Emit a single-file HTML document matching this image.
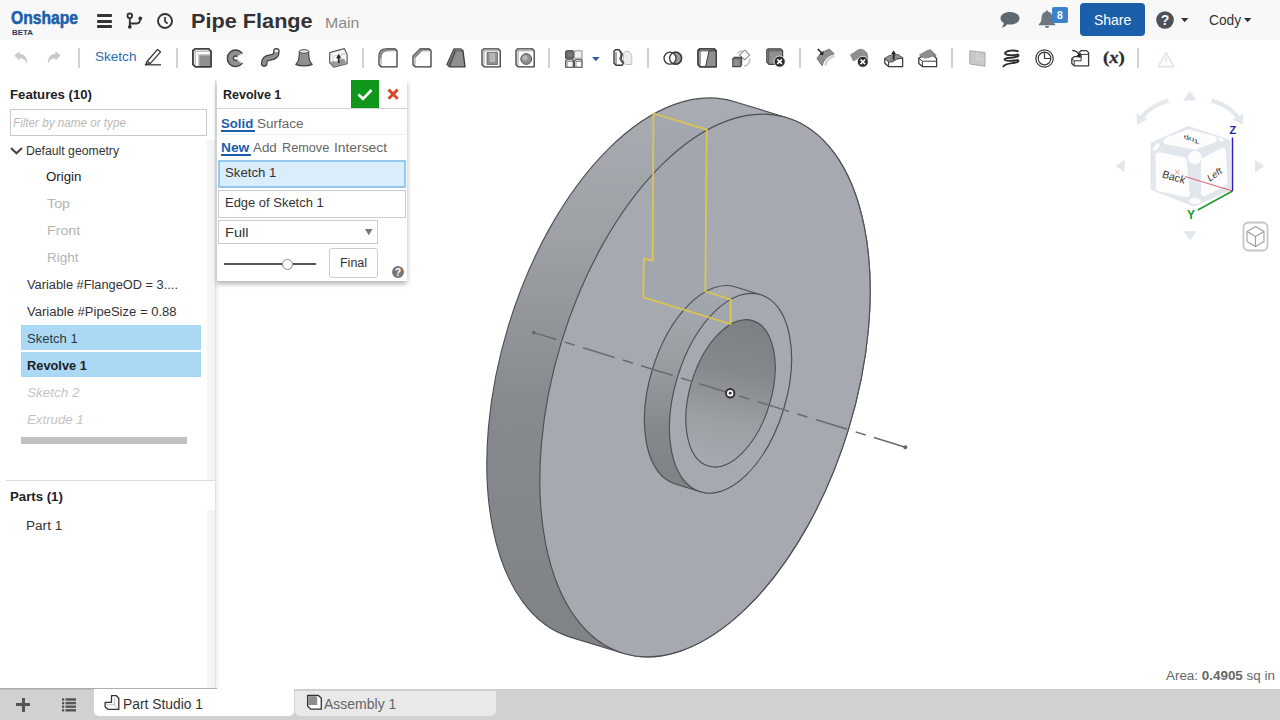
<!DOCTYPE html>
<html>
<head>
<meta charset="utf-8">
<title>Pipe Flange</title>
<style>
*{box-sizing:border-box;margin:0;padding:0}
html,body{width:1280px;height:720px;overflow:hidden;background:#fff;font-family:"Liberation Sans",sans-serif;color:#333}
.abs{position:absolute}
#hdr{position:absolute;left:0;top:0;width:1280px;height:40px;background:#f8f8f8}
#tb{position:absolute;left:0;top:40px;width:1280px;height:40px;background:#fff;z-index:5}
.t{position:absolute;white-space:nowrap;line-height:1}
#left{position:absolute;left:0;top:78px;width:216px;height:610px;background:#fff;box-shadow:1px 0 4px rgba(0,0,0,.10)}
#tabs{position:absolute;left:0;top:690px;width:1280px;height:30px;background:#d1d1d1}
#dlg{position:absolute;left:217px;top:80px;width:190px;height:201px;background:#fff;box-shadow:0 3px 5px rgba(0,0,0,.30)}
svg{position:absolute;overflow:visible}
</style>
</head>
<body>
<!-- HEADER -->
<div id="hdr">
  <div class="t" id="logo" style="left:11.0px;top:9.2px;font-size:18px;font-weight:bold;color:#1b5faa;-webkit-text-stroke:0.55px #1b5faa;transform:scaleX(0.871);transform-origin:0 0">Onshape</div>
  <div class="t" id="beta" style="left:11.5px;top:28.5px;font-size:7.5px;font-weight:bold;color:#2d3b63;transform:scaleX(1.059);transform-origin:0 0">BETA</div>
  <!-- hamburger -->
  <div class="abs" style="left:97px;top:14px;width:15px;height:3px;background:#333;border-radius:1px"></div>
  <div class="abs" style="left:97px;top:19.5px;width:15px;height:3px;background:#333;border-radius:1px"></div>
  <div class="abs" style="left:97px;top:25px;width:15px;height:3px;background:#333;border-radius:1px"></div>
  <!-- branch -->
  <svg style="left:126px;top:12px" width="18" height="18" viewBox="0 0 18 18"><g fill="none" stroke="#333" stroke-width="1.8"><circle cx="3.8" cy="3.8" r="2.3" fill="#f8f8f8"/><path d="M3.8 6.2V15"/><path d="M3.8 11.5H10.5Q14.2 11.5 14.2 7"/></g><circle cx="3.8" cy="14.8" r="1.9" fill="#333"/><circle cx="14.3" cy="6.3" r="1.9" fill="#333"/></svg>
  <!-- clock -->
  <svg style="left:157px;top:13px" width="16" height="16" viewBox="0 0 16 16"><circle cx="8" cy="8" r="7" fill="none" stroke="#333" stroke-width="1.9"/><path d="M8 4V8.3L10.6 10.6" fill="none" stroke="#333" stroke-width="1.7"/></svg>
  <div class="t" id="title" style="left:191.4px;top:10.9px;font-size:20px;font-weight:bold;color:#333;transform:scaleX(1.084);transform-origin:0 0">Pipe Flange</div>
  <div class="t" id="main" style="left:324.6px;top:15.5px;font-size:14.5px;color:#8a8a8a;transform:scaleX(1.095);transform-origin:0 0">Main</div>
  <!-- chat -->
  <svg style="left:1000px;top:12px" width="20" height="16" viewBox="0 0 20 16"><path d="M10 0C4.5 0 0.5 2.7 0.5 6.2 0.5 8.2 1.8 9.9 3.8 11 3.6 12.6 2.7 14.3 1.6 15.6 4 15.3 6 14 7.2 12.3 8.1 12.5 9 12.6 10 12.6 15.3 12.6 19.5 9.8 19.5 6.2 19.5 2.7 15.3 0 10 0Z" fill="#5d6a74"/></svg>
  <!-- bell -->
  <svg style="left:1038px;top:10px" width="18" height="18" viewBox="0 0 18 18"><path d="M9 0.5C8.2 0.5 7.7 1.1 7.7 1.8 5 2.5 3.6 4.8 3.6 7.6 3.6 11.2 2.6 12.6 0.8 14.2V15.2H17.2V14.2C15.4 12.6 14.4 11.2 14.4 7.6 14.4 4.8 13 2.5 10.3 1.8 10.3 1.1 9.8 0.5 9 0.5ZM6.9 16C6.9 17.1 7.8 18 9 18 10.2 18 11.1 17.1 11.1 16Z" fill="#6b7680"/></svg>
  <div class="abs" style="left:1052px;top:7px;width:16px;height:16px;background:#3a83cc;border-radius:2px"></div>
  <div class="t" style="left:1057px;top:10px;font-size:10.5px;font-weight:bold;color:#fff">8</div>
  <!-- share -->
  <div class="abs" style="left:1080px;top:3px;width:65px;height:33px;background:#1b5faa;border-radius:4px"></div>
  <div class="t" id="share" style="left:1093.8px;top:12.7px;font-size:14.5px;color:#fff;transform:scaleX(0.962);transform-origin:0 0">Share</div>
  <!-- help -->
  <svg style="left:1156px;top:11px" width="18" height="18" viewBox="0 0 18 18"><circle cx="9" cy="9" r="8.8" fill="#4b5259"/><text x="9" y="14" font-family="Liberation Sans" font-weight="bold" font-size="14" fill="#f8f8f8" text-anchor="middle">?</text></svg>
  <svg style="left:1181px;top:18px" width="7.4" height="4.3" viewBox="0 0 7.4 4.3"><path d="M0 0H7.4L3.7 4.3Z" fill="#333"/></svg>
  <div class="t" id="cody" style="left:1209.0px;top:12.7px;font-size:14.5px;color:#333;transform:scaleX(0.946);transform-origin:0 0">Cody</div>
  <svg style="left:1244.3px;top:18px" width="7.4" height="4.3" viewBox="0 0 7.4 4.3"><path d="M0 0H7.4L3.7 4.3Z" fill="#333"/></svg>
</div>
<!-- TOOLBAR -->
<div id="tb">
  <svg style="left:13.5px;top:11px" width="14" height="14" viewBox="0 0 14 14"><path d="M0.3 4.6L5.6 0.2V3.1C10.5 3.1 13.2 6.2 13.2 13.2 11.8 9.3 9.5 7.2 5.6 7.2V9.8Z" fill="#c9c9c9"/></svg>
  <svg style="left:46.7px;top:11px" width="14" height="14" viewBox="0 0 14 14"><path d="M13.7 4.6L8.4 0.2V3.1C3.5 3.1 0.8 6.2 0.8 13.2 2.2 9.3 4.5 7.2 8.4 7.2V9.8Z" fill="#c9c9c9"/></svg>
  <div class="abs" style="left:78px;top:8px;width:2px;height:20px;background:#d2d2d2"></div>
  <div class="t" style="left:94.7px;top:10.0px;font-size:13px;color:#2e6bb0;transform:scaleX(1.042);transform-origin:0 0">Sketch</div>
  <svg style="left:144px;top:8px" width="18" height="18" viewBox="0 0 18 18"><g fill="none" stroke="#3a3a3a" stroke-width="1.3" stroke-linejoin="round"><path d="M3.2 13.2L13.6 1.4L16.6 3.9L6.2 15.6L1.8 16.6Z"/><path d="M3.2 13.2L6.2 15.6"/><path d="M0.8 16.8H17"/></g><path d="M1.8 16.6L2.4 14.4L4.2 15.9Z" fill="#3a3a3a"/></svg>
  <div class="abs" style="left:176px;top:8px;width:2px;height:20px;background:#d2d2d2"></div>
  <svg style="left:192px;top:8px" width="20" height="20" viewBox="0 0 20 20"><path d="M0.9 2.6L2.8 0.9H16.8L19 3.2V18.8H3.2L0.9 16.6Z" fill="#fff" stroke="#3a3a3a" stroke-width="1.4" stroke-linejoin="round"/><path d="M3.2 3.2H18.6M3.2 3.2V18.4M3.2 3.2L1.4 1.6" fill="none" stroke="#8a8a8a" stroke-width="0.8"/><rect x="7" y="7" width="11.6" height="11.4" fill="#8f8f8f"/><path d="M7 18.4V7H18.6" fill="none" stroke="#b4b4b4" stroke-width="1.4"/><path d="M0.9 2.6L2.8 0.9H16.8L19 3.2V18.8H3.2L0.9 16.6Z" fill="none" stroke="#3a3a3a" stroke-width="1.4" stroke-linejoin="round"/></svg>
  <svg style="left:226.5px;top:8.5px" width="18" height="19" viewBox="0 0 18 19"><path d="M15.14 4.19A8.3 8.3 0 1 0 15.14 14.41L10 11A2.2 2.2 0 1 1 10 7.6Z" fill="#8f8f8f" stroke="#404040" stroke-width="1.4" stroke-linejoin="round"/><path d="M14.3 5L10.9 7.4" stroke="#e2e2e2" stroke-width="1.5" stroke-linecap="round"/><path d="M14.3 13.6L10.9 11.2" stroke="#e2e2e2" stroke-width="1.5" stroke-linecap="round"/></svg>
  <svg style="left:260px;top:8px" width="20" height="20" viewBox="0 0 20 20"><path d="M4.2 15.6C4.2 10.8 6.6 9.9 10.2 9.4 13.8 8.9 16.4 8.2 16.4 3.4" fill="none" stroke="#404040" stroke-width="6.6" stroke-linecap="round"/><path d="M4.2 15.6C4.2 10.8 6.6 9.9 10.2 9.4 13.8 8.9 16.4 8.2 16.4 3.4" fill="none" stroke="#8f8f8f" stroke-width="4" stroke-linecap="round"/><ellipse cx="16.4" cy="2.9" rx="2" ry="1.3" fill="#ececec"/></svg>
  <svg style="left:295px;top:8.5px" width="18" height="18" viewBox="0 0 18 18"><path d="M4.4 2.4C4.4 10 3.2 13.5 0.8 15.4 5 17.4 13 17.4 17.2 15.4 14.8 13.5 13.6 10 13.6 2.4Z" fill="#8f8f8f" stroke="#444" stroke-width="1.2" stroke-linejoin="round"/><ellipse cx="9" cy="2.5" rx="4.6" ry="1.8" fill="#efefef" stroke="#444" stroke-width="1"/></svg>
  <svg style="left:328.5px;top:7.5px" width="19" height="20" viewBox="0 0 19 20"><path d="M0.7 4.7L15.4 0.7L18.1 6.3V15.6L4.7 19.2L0.7 14.5Z" fill="#fbfbfb" stroke="#5a5a5a" stroke-width="1.2" stroke-linejoin="round"/><path d="M1 14.4L4.2 13L8.5 13.8L11.8 11L15.2 10.6L17.7 15.4L4.8 18.8Z" fill="#9a9a9a"/><path d="M0.7 4.7L4 8.2V13M4 8.2L18 6.3M12 5.8L16 5.2" fill="none" stroke="#c2c2c2" stroke-width="0.8"/><path d="M9.7 15V9.5" stroke="#2a2a2a" stroke-width="1.8"/><path d="M7.1 10.2L9.7 5.8L12.3 10.2Z" fill="#2a2a2a"/></svg>
  <div class="abs" style="left:362px;top:8px;width:2px;height:20px;background:#d2d2d2"></div>
  <svg style="left:378px;top:8px" width="20" height="20" viewBox="0 0 20 20"><path d="M1 8.5Q1 1 8.5 1H17.2L19 2.8V18.8H3L1 16.8Z" fill="#fff" stroke="#3a3a3a" stroke-width="1.3" stroke-linejoin="round"/><path d="M1 8.5Q1 1 8.5 1L10.5 2.8Q3 2.8 3 10.3Z" fill="#8f8f8f"/><path d="M3 18.6V10.3Q3 2.8 10.5 2.8H18.8M3 10.3L1.2 8.6M10.5 2.8L8.6 1.1" fill="none" stroke="#777" stroke-width="0.8"/></svg>
  <svg style="left:411.5px;top:8px" width="20" height="20" viewBox="0 0 20 20"><path d="M1 8L8 1H17.2L19 2.8V18.8H3L1 16.8Z" fill="#fff" stroke="#3a3a3a" stroke-width="1.3" stroke-linejoin="round"/><path d="M1 8L8 1L10 2.8L3 9.8Z" fill="#8f8f8f"/><path d="M3 18.6V9.8L10 2.8H18.8M3 9.8L1.2 8.1M10 2.8L8.1 1.1" fill="none" stroke="#777" stroke-width="0.8"/></svg>
  <svg style="left:445.5px;top:8px" width="20" height="20" viewBox="0 0 20 20"><path d="M1 16.5L7.8 1.2H15.2L17 2.8L19 18.8H3.5Z" fill="#8f8f8f" stroke="#3a3a3a" stroke-width="1.3" stroke-linejoin="round"/><path d="M7.8 1.2H15.2L17 2.8H9.6Z" fill="#eee" stroke="#3a3a3a" stroke-width="0.9"/><path d="M1 16.5L7.8 1.2L9.6 2.8L3.5 18.6Z" fill="#6e6e6e"/><path d="M9.6 2.8L3.5 18.6" fill="none" stroke="#3a3a3a" stroke-width="0.9"/></svg>
  <svg style="left:480.5px;top:8px" width="20" height="20" viewBox="0 0 20 20"><path d="M1 2.2L2.8 0.8H17.2L19.2 2.8V18.8H3L1 16.8Z" fill="#fff" stroke="#3a3a3a" stroke-width="1.3" stroke-linejoin="round"/><path d="M3 2.8H19M3 2.8V18.6M3 2.8L1.2 1.4" fill="none" stroke="#808080" stroke-width="0.8"/><path d="M6 4.5H16.5V16.5H6Z" fill="#8f8f8f"/><path d="M8.6 4.5H14.2V14H8.6Z" fill="#b8b8b8"/><path d="M6 4.5H16.5V16.5H6Z" fill="none" stroke="#666" stroke-width="0.8"/></svg>
  <svg style="left:514.5px;top:8px" width="20" height="20" viewBox="0 0 20 20"><path d="M1 2.2L2.8 0.8H17.2L19.2 2.8V18.8H3L1 16.8Z" fill="#fff" stroke="#3a3a3a" stroke-width="1.3" stroke-linejoin="round"/><path d="M3 2.8H19M3 2.8V18.6M3 2.8L1.2 1.4" fill="none" stroke="#808080" stroke-width="0.8"/><circle cx="11.2" cy="11" r="5.4" fill="#8f8f8f" stroke="#555" stroke-width="1"/><circle cx="10" cy="9.8" r="2.6" fill="#b5b5b5"/></svg>
  <div class="abs" style="left:548px;top:8px;width:2px;height:20px;background:#d2d2d2"></div>
  <svg style="left:565px;top:9.5px" width="18" height="18" viewBox="0 0 18 18"><g stroke="#3a3a3a" stroke-width="1.1" stroke-linejoin="round"><path d="M0.7 2L2 0.7H8.2V8.2H0.7Z" fill="#777"/><path d="M9.4 2L10.7 0.7H17V8.2H9.4Z" fill="#eee" stroke="#999"/><path d="M0.7 11L2 9.7H8.2V17.3H0.7Z" fill="#fff"/><path d="M9.4 11L10.7 9.7H17V17.3H9.4Z" fill="#fff"/></g><path d="M2.2 2.5H8M2.2 2.5V8M11 11.5H16.8M11 11.5V17M2.2 11.5H8M2.2 11.5V17" fill="none" stroke="#666" stroke-width="0.7"/></svg>
  <svg style="left:592.3px;top:17px" width="7.7" height="4.2" viewBox="0 0 7.7 4.2"><path d="M0 0H7.7L3.85 4.2Z" fill="#2e5f9e"/></svg>
  <svg style="left:613px;top:8.5px" width="20" height="18" viewBox="0 0 20 18"><path d="M10.5 4.5L12 2.5H16L18.8 5.8V15.5H12.5L10.5 14Z" fill="#ececec" stroke="#c2c2c2" stroke-width="1"/><path d="M1 2L2.8 0.8H6.2L9.2 5L8 10L10.5 14.2L9.2 16.2H3L1 14.2Z" fill="#fff" stroke="#3a3a3a" stroke-width="1.4" stroke-linejoin="round"/><path d="M3 3V15.5M6.2 1L8 5.2 6.8 10 9.2 14" fill="none" stroke="#3a3a3a" stroke-width="0.9"/></svg>
  <div class="abs" style="left:647px;top:8px;width:2px;height:20px;background:#d2d2d2"></div>
  <svg style="left:663px;top:10.5px" width="20" height="15" viewBox="0 0 20 15"><circle cx="12.6" cy="7.2" r="6" fill="#9a9a9a" stroke="#3a3a3a" stroke-width="1.3"/><circle cx="7" cy="7.2" r="6" fill="#fff" stroke="#3a3a3a" stroke-width="1.3"/><circle cx="12.6" cy="7.2" r="6" fill="none" stroke="#3a3a3a" stroke-width="1.3"/></svg>
  <svg style="left:697px;top:8px" width="20" height="20" viewBox="0 0 20 20"><path d="M1 2.2L2.8 0.8H17.2L19.2 2.8V18.8H3L1 16.8Z" fill="#fff" stroke="#3a3a3a" stroke-width="1.3" stroke-linejoin="round"/><path d="M11.5 0.8H17.2L19.2 2.8V18.8H8.6L12 3Z" fill="#8f8f8f"/><path d="M3 2.8H19M3 2.8V18.6M3 2.8L1.2 1.4M12 3L8.6 18.6" fill="none" stroke="#3a3a3a" stroke-width="1"/><path d="M1 2.2L2.8 0.8H17.2L19.2 2.8V18.8H3L1 16.8Z" fill="none" stroke="#3a3a3a" stroke-width="1.3" stroke-linejoin="round"/></svg>
  <svg style="left:731.5px;top:8.5px" width="20" height="19" viewBox="0 0 20 19"><path d="M5.5 4.5A8.2 8.2 0 0 1 10.2 1.5M17.8 9.5A8.2 8.2 0 0 1 12 17.6" fill="none" stroke="#c6c6c6" stroke-width="1.6"/><path d="M12.6 1L17.6 6L12.6 11L7.6 6Z" fill="#fff" stroke="#555" stroke-width="1"/><path d="M0.8 9.6L2.2 8.4H9.6V16L8.2 17.6H0.8Z" fill="#8f8f8f" stroke="#444" stroke-width="1.1" stroke-linejoin="round"/><path d="M0.8 9.8H8.2V17.4M8.2 9.8L9.4 8.6" fill="none" stroke="#555" stroke-width="0.8"/></svg>
  <svg style="left:765.5px;top:7.5px" width="20" height="20" viewBox="0 0 20 20"><path d="M0.8 2L2.2 0.8H14.8L16.6 2.6V14.6L15 16.4H3L0.8 14.2Z" fill="#8f8f8f" stroke="#444" stroke-width="1.2" stroke-linejoin="round"/><path d="M2.8 2.8H16.4M2.8 2.8V16M2.8 2.8L1 1.2" fill="none" stroke="#555" stroke-width="0.9"/><circle cx="13.6" cy="13.6" r="5.6" fill="#2b2b2b" stroke="#fff" stroke-width="0.8"/><path d="M11.3 11.3L15.9 15.9M15.9 11.3L11.3 15.9" stroke="#fff" stroke-width="1.7"/></svg>
  <div class="abs" style="left:799px;top:8px;width:2px;height:20px;background:#d2d2d2"></div>
  <svg style="left:816px;top:7.5px" width="20" height="20" viewBox="0 0 20 20"><path d="M9.5 17.5C10 13 12.5 9.5 18.5 8" fill="none" stroke="#d4d4d4" stroke-width="2.6"/><path d="M1 10.5C3 6.5 7 3.2 13.6 1.2L18.2 5.8C11.5 7.5 7.5 11.5 6.2 17.8Z" fill="#8f8f8f" stroke="#6a6a6a" stroke-width="0.9" stroke-linejoin="round"/><path d="M1.8 1L5.6 4.8" stroke="#222" stroke-width="1.6"/><path d="M7.6 2.8L7.2 7.2L3 6.6Z" fill="#222"/></svg>
  <svg style="left:849.5px;top:8px" width="20" height="20" viewBox="0 0 20 20"><path d="M0.6 6.5C4 6 6.5 1.5 10.5 1.2 13.5 1 15.5 3.5 17 5.2L18 11.5C15 8.8 12 8.6 9.5 9.6 7.5 10.4 5.5 12.5 3.2 12.6Z" fill="#8f8f8f" stroke="#777" stroke-width="0.8" stroke-linejoin="round"/><circle cx="12.8" cy="13.8" r="5.5" fill="#2b2b2b" stroke="#fff" stroke-width="0.8"/><path d="M10.5 11.5L15.1 16.1M15.1 11.5L10.5 16.1" stroke="#fff" stroke-width="1.7"/></svg>
  <svg style="left:883.5px;top:9.5px" width="20" height="18" viewBox="0 0 20 18"><path d="M0.8 8.5L6 5.5L9.5 6.5L13.5 4.5L18.6 8V16.6H4.6L0.8 13.2Z" fill="#fff" stroke="#3a3a3a" stroke-width="1.3" stroke-linejoin="round"/><path d="M0.8 8.5L6 5.5 9.5 6.5 13.5 4.5 18.6 8 12.5 9.2 8.5 11.8 4.6 12Z" fill="#8f8f8f"/><path d="M0.8 8.5L4.6 12V16.4M4.6 12L8.5 11.8 12.5 9.2 18.6 8" fill="none" stroke="#3a3a3a" stroke-width="1"/><path d="M9.6 9.6V4" stroke="#222" stroke-width="1.8"/><path d="M6.9 4.6L9.6 0.6L12.3 4.6Z" fill="#222"/></svg>
  <svg style="left:917.5px;top:8.5px" width="20" height="19" viewBox="0 0 20 19"><path d="M0.8 9.2L5 6.6H15.5L18.6 9.4V17.6H4.4L0.8 14.4Z" fill="#fff" stroke="#3a3a3a" stroke-width="1.3" stroke-linejoin="round"/><path d="M0.8 9.2L4.4 12.2V17.4M4.4 12.2H18.4" fill="none" stroke="#3a3a3a" stroke-width="1"/><path d="M1.5 5.8C5 4.5 8 1.2 12.5 0.8L18.2 6.2C14.5 6 13 8.4 8.5 9 6 9.3 4 8 1.5 5.8Z" fill="#8f8f8f" stroke="#777" stroke-width="0.8" stroke-linejoin="round"/></svg>
  <div class="abs" style="left:951px;top:8px;width:2px;height:20px;background:#d2d2d2"></div>
  <svg style="left:968.5px;top:9.5px" width="17" height="17" viewBox="0 0 17 17"><path d="M0.8 0.8L16 2.6V16.2L0.8 14Z" fill="#c9c9c9" stroke="#a8a8a8" stroke-width="1" stroke-linejoin="round"/><path d="M8 1.6V9.2H16" fill="none" stroke="#dadada" stroke-width="0.9"/></svg>
  <svg style="left:1002px;top:8.5px" width="18" height="19" viewBox="0 0 18 19"><g fill="none" stroke="#2e2e2e" stroke-width="1.9" stroke-linecap="round"><path d="M15.8 2.2C12 0.8 4.5 1.4 3.2 3.8 2.2 6 8 6.8 15.6 5.6"/><path d="M15.6 5.6C17.5 6.4 16.5 7.6 12.5 8.2 7 9 2.2 9 2.6 10.6 3 12 8 12.2 15.6 11.2"/><path d="M15.6 11.2C17.4 12 16.4 13.2 12.5 13.8 7.5 14.6 2.8 14.8 1.4 17.4"/></g></svg>
  <svg style="left:1035px;top:8.5px" width="19" height="19" viewBox="0 0 19 19"><circle cx="9.5" cy="9.5" r="8.7" fill="#fff" stroke="#3a3a3a" stroke-width="1.2"/><circle cx="9.5" cy="9.5" r="6.3" fill="#fff" stroke="#3a3a3a" stroke-width="1.2"/><path d="M9.5 3.2V9.5H15.8" fill="none" stroke="#3a3a3a" stroke-width="1.2"/></svg>
  <svg style="left:1070.5px;top:9px" width="19" height="18" viewBox="0 0 19 18"><path d="M0.8 9.8L3.4 7.6H8.2V3.2L10.4 1.6H15.6L17.6 3.6V16.8H3.2L0.8 14.6Z" fill="#fff" stroke="#3a3a3a" stroke-width="1.3" stroke-linejoin="round"/><path d="M0.8 9.8L3.2 11.8H10.2V5.4M3.2 11.8V16.6M10.2 5.4H17.4M10.2 5.4L8.4 3.4" fill="none" stroke="#3a3a3a" stroke-width="1"/><path d="M1.2 1.4C5 1.6 7.2 3.6 8.4 6.6" fill="none" stroke="#222" stroke-width="1.2"/><path d="M5.4 6.6L9.6 9.2L10 4.6Z" fill="#222"/></svg>
  <div class="t" style="left:1102.6px;top:9px;transform:scaleX(1.1);transform-origin:0 0;-webkit-text-stroke:0.3px #2b2b2b;font-family:'Liberation Serif',serif;font-size:17px;font-weight:bold;color:#2b2b2b">(<i>x</i>)</div>
  <div class="abs" style="left:1137px;top:8px;width:2px;height:20px;background:#d2d2d2"></div>
  <svg style="left:1157px;top:10.5px" width="18" height="17" viewBox="0 0 18 17"><path d="M9 1.6L16.8 15.6H1.2Z" fill="none" stroke="#dfe6ea" stroke-width="1.6" stroke-linejoin="round"/><path d="M9 6V11" stroke="#dfe6ea" stroke-width="1.6"/><circle cx="9" cy="13.2" r="0.9" fill="#dfe6ea"/></svg>
</div>
<!-- LEFT PANEL -->
<div id="left">
  <div class="t" style="left:9.8px;top:11.1px;font-size:12.5px;font-weight:bold;color:#222;transform:scaleX(1.054);transform-origin:0 0">Features (10)</div>
  <div class="abs" style="left:10px;top:31px;width:197px;height:27px;border:1px solid #c9c9c9;background:#fff"></div>
  <div class="t" style="left:13.0px;top:38.8px;font-size:12px;font-style:italic;color:#b9b9b9;transform:scaleX(0.973);transform-origin:0 0">Filter by name or type</div>
  <svg style="left:10px;top:69px" width="13" height="8" viewBox="0 0 13 8"><path d="M1 1L6.5 6.3L12 1" fill="none" stroke="#444" stroke-width="2"/></svg>
  <div class="t" style="left:25.5px;top:67.2px;font-size:12px;color:#333;transform:scaleX(1.018);transform-origin:0 0">Default geometry</div>
  <div class="t" style="left:46.4px;top:92.7px;font-size:12.5px;color:#222;transform:scaleX(1.063);transform-origin:0 0">Origin</div>
  <div class="t" style="left:46.5px;top:119.7px;font-size:12.5px;color:#b4b4b4;transform:scaleX(1.144);transform-origin:0 0">Top</div>
  <div class="t" style="left:46.5px;top:146.7px;font-size:12.5px;color:#b4b4b4;transform:scaleX(1.136);transform-origin:0 0">Front</div>
  <div class="t" style="left:46.5px;top:173.7px;font-size:12.5px;color:#b4b4b4;transform:scaleX(1.084);transform-origin:0 0">Right</div>
  <div class="t" style="left:26.6px;top:201.1px;font-size:12.5px;color:#333;transform:scaleX(1.024);transform-origin:0 0">Variable #FlangeOD = 3....</div>
  <div class="t" style="left:26.6px;top:227.9px;font-size:12.5px;color:#333;transform:scaleX(1.044);transform-origin:0 0">Variable #PipeSize = 0.88</div>
  <div class="abs" style="left:21px;top:247px;width:180px;height:25px;background:#abd8f5"></div>
  <div class="abs" style="left:21px;top:274px;width:180px;height:25px;background:#abd8f5"></div>
  <div class="t" style="left:26.6px;top:254.9px;font-size:12.5px;color:#2a3a44;transform:scaleX(1.043);transform-origin:0 0">Sketch 1</div>
  <div class="t" style="left:26.6px;top:281.9px;font-size:12.5px;font-weight:bold;color:#222;transform:scaleX(1.025);transform-origin:0 0">Revolve 1</div>
  <div class="t" style="left:27.2px;top:308.9px;font-size:12.5px;font-style:italic;color:#c4c4c4;transform:scaleX(1.078);transform-origin:0 0">Sketch 2</div>
  <div class="t" style="left:27.2px;top:335.9px;font-size:12.5px;font-style:italic;color:#c4c4c4;transform:scaleX(1.060);transform-origin:0 0">Extrude 1</div>
  <div class="abs" style="left:21px;top:359px;width:166px;height:7px;background:#c1c1c1"></div>
  <div class="abs" style="left:207px;top:62px;width:9px;height:340px;background:#f5f5f5"></div>
  <div class="abs" style="left:6px;top:402px;width:210px;height:1px;background:#ddd"></div>
  <div class="t" style="left:9.5px;top:412.6px;font-size:12.5px;font-weight:bold;color:#222;transform:scaleX(1.056);transform-origin:0 0">Parts (1)</div>
  <div class="t" style="left:26.1px;top:442.3px;font-size:12.5px;color:#333;transform:scaleX(1.087);transform-origin:0 0">Part 1</div>
  <div class="abs" style="left:207px;top:432px;width:9px;height:178px;background:#f5f5f5"></div>
  <div class="abs" style="left:215px;top:0;width:1px;height:610px;background:#e2e2e2"></div>
</div>
<!-- VIEWPORT -->
<div id="vp">
<svg style="left:0;top:0" width="1280" height="720" viewBox="0 0 1280 720">
  <defs>
    <linearGradient id="gside" gradientUnits="userSpaceOnUse" x1="0" y1="100" x2="0" y2="660">
      <stop offset="0" stop-color="#a9adb3"/><stop offset="0.25" stop-color="#9da1a6"/><stop offset="0.55" stop-color="#868a8e"/><stop offset="1" stop-color="#7f8386"/>
    </linearGradient>
    <linearGradient id="ghub" gradientUnits="userSpaceOnUse" x1="0" y1="285" x2="0" y2="495">
      <stop offset="0" stop-color="#a9adb3"/><stop offset="0.35" stop-color="#9a9ea3"/><stop offset="0.7" stop-color="#84888c"/><stop offset="1" stop-color="#7d8185"/>
    </linearGradient>
    <linearGradient id="gbore" gradientUnits="userSpaceOnUse" x1="745" y1="320" x2="715" y2="467">
      <stop offset="0" stop-color="#7c8084"/><stop offset="0.35" stop-color="#85898d"/><stop offset="0.7" stop-color="#9ca0a5"/><stop offset="1" stop-color="#a7abb1"/>
    </linearGradient>
  </defs>
  <!-- flange body -->
  <g stroke="#4c5054" stroke-width="1.15" stroke-linejoin="round">
    <path d="M733.9 101.5A150 280 17 0 0 570.1 637.1L623.1 653.3A150 280 17 0 0 786.9 117.7Z" fill="url(#gside)"/>
    <path d="M786.9 117.7A150 280 17 1 0 623.1 653.3A150 280 17 1 0 786.9 117.7Z" fill="#a6aab0"/>
  </g>
  <!-- hub -->
  <g stroke="#4c5054" stroke-width="1.15" stroke-linejoin="round">
    <path d="M734.7 286.7A55 103 17 0 0 674.5 483.7L700.4 491.8A55 103 17 0 0 760.6 294.8Z" fill="url(#ghub)"/>
    <path d="M760.6 294.8A55 103 17 1 0 700.4 491.8A55 103 17 1 0 760.6 294.8Z" fill="#a6aab0"/>
    <path d="M752.7 320.6A40.5 76 17 1 0 708.3 466.0A40.5 76 17 1 0 752.7 320.6Z" fill="url(#gbore)"/>
  </g>
  <!-- sketch highlight -->
  <path d="M653.4 113.5L706.8 129.7L705.3 291.5L730.7 299.5L730.7 324L643.3 297.3L643.9 258.5L652.7 260.6Z" fill="rgba(110,130,165,0.07)" stroke="none"/>
  <path d="M653.4 113.5L706.8 129.7L705.3 291.5L730.7 299.5L730.7 324L643.3 297.3L643.9 258.5L652.7 260.6Z" fill="none" stroke="#dcc54c" stroke-width="1.8" stroke-linejoin="round"/>
  <!-- axis -->
  <path d="M533.8 332.6L905.3 447.2" fill="none" stroke="#686c70" stroke-width="1.5" stroke-dasharray="33 8.7 10.5 8.7" stroke-dashoffset="9.4"/>
  <circle cx="533.8" cy="332.6" r="1.9" fill="#64686c"/><circle cx="905.3" cy="447.2" r="2" fill="#64686c"/>
  <!-- origin -->
  <circle cx="730.2" cy="393.2" r="4.2" fill="#fff" stroke="#2d3135" stroke-width="2"/><circle cx="730.2" cy="393.2" r="1.4" fill="#2d3135"/>
</svg>
</div>
<svg id="cube" style="left:0;top:0" width="1280" height="720" viewBox="0 0 1280 720">
  <g fill="#e3e8ed">
    <path d="M1183.2 100.5L1190 91.3L1196.8 100.5Z"/>
    <path d="M1183.2 231.3L1190 240.3L1196.8 231.3Z"/>
    <path d="M1124.6 159.4L1115.5 166L1124.6 172.6Z"/>
    <path d="M1255 159.4L1264.2 166L1255 172.6Z"/>
  </g>
  <g fill="none" stroke="#e3e8ed" stroke-width="4.2">
    <path d="M1168.5 100.5Q1150 106 1141.5 118"/>
    <path d="M1211.5 100.5Q1230 106 1238.5 118"/>
  </g>
  <path d="M1136.5 113.5L1147.5 119.5L1137.2 124.8Z" fill="#e3e8ed"/>
  <path d="M1243.5 113.5L1232.5 119.5L1242.8 124.8Z" fill="#e3e8ed"/>
  <!-- cube frame -->
  <path d="M1188.5 128.5L1228 141.5L1228.5 188.5L1194 204L1153 188L1153 144.5Z" fill="#e1e7ed" stroke="#e1e7ed" stroke-width="5" stroke-linejoin="round"/>
  <!-- faces -->
  <g fill="#fdfdfe" stroke="#fdfdfe" stroke-width="7" stroke-linejoin="round">
    <path d="M1188.8 132.8L1213.5 139.3L1195 146L1167 141Z"/>
    <path d="M1159 156L1183 160.5L1186.3 193.5L1159.5 188Z"/>
    <path d="M1204.5 161L1222.5 151.5L1224 182.5L1204.5 192.5Z"/>
  </g>
  <circle cx="1195" cy="157.5" r="6.8" fill="#fdfdfe"/>
  <ellipse cx="1195" cy="201" rx="6" ry="3" fill="#fdfdfe"/>
  <ellipse cx="1156.3" cy="147" rx="2.2" ry="4.6" transform="rotate(38 1156.3 147)" fill="#fdfdfe"/>
  <ellipse cx="1221" cy="139.5" rx="3" ry="1.6" transform="rotate(25 1221 139.5)" fill="#fdfdfe"/>
  <!-- axes -->
  <path d="M1232.5 191L1185 176.5" stroke="#e0485a" stroke-width="0.9"/>
  <path d="M1175 170L1179.5 174.5M1179.5 170L1175 174.5" stroke="#e58a94" stroke-width="0.8"/>
  <path d="M1232.5 191V137.5" stroke="#2a22c8" stroke-width="1.5"/>
  <path d="M1232.5 191L1197.8 210" stroke="#1c9a2c" stroke-width="1.5"/>
  <text x="1229.3" y="133.5" font-family="Liberation Sans" font-weight="bold" font-size="11.5" fill="#2a1fb0">Z</text>
  <text x="1187" y="218.8" font-family="Liberation Sans" font-weight="bold" font-size="12" fill="#189a28">Y</text>
  <text transform="translate(1161.5 177.2) rotate(16) skewX(-2)" font-family="Liberation Sans" font-size="10.5" fill="#333">Back</text>
  <text transform="translate(1209.5 182) rotate(-36) skewX(-12)" font-family="Liberation Sans" font-size="9.5" fill="#333">Left</text>
  <text transform="translate(1198.8 139.8) rotate(197) skewX(26) scale(1 0.62)" font-family="Liberation Sans" font-size="10" fill="#333">Top</text>
  <!-- view button -->
  <rect x="1243.5" y="222.5" width="24" height="28" rx="5" fill="#fff" stroke="#c3c7cb" stroke-width="1.8"/>
  <path d="M1255.5 226.5L1264 231.5V241.5L1255.5 246.5L1247 241.5V231.5ZM1247 231.5L1255.5 236.5L1264 231.5M1255.5 236.5V246.5" fill="none" stroke="#9a9ea2" stroke-width="1.1" stroke-linejoin="round"/>
</svg>
<!-- DIALOG -->
<div id="dlg">
  <div class="t" style="left:5.6px;top:9.1px;font-size:12.5px;font-weight:bold;color:#222;transform:scaleX(0.998);transform-origin:0 0">Revolve 1</div>
  <div class="abs" style="left:134px;top:0px;width:28px;height:28px;background:#109618"></div>
  <svg style="left:140px;top:8px" width="16" height="13" viewBox="0 0 16 13"><path d="M1.5 6.5L6 10.8L14.5 2" fill="none" stroke="#fff" stroke-width="2.6"/></svg>
  <svg style="left:170px;top:8px" width="12" height="12" viewBox="0 0 12 12"><path d="M1.5 1.6L10.7 10.8M10.7 1.6L1.5 10.8" fill="none" stroke="#d9482b" stroke-width="2.9"/></svg>
  <div class="abs" style="left:0;top:28px;width:190px;height:1px;background:#d0d0d0"></div>
  <div class="t" style="left:3.6px;top:37.8px;font-size:12.5px;font-weight:bold;color:#1b5faa;transform:scaleX(1.055);transform-origin:0 0">Solid</div>
  <div class="abs" style="left:4px;top:49.5px;width:34px;height:2px;background:#1b5faa"></div>
  <div class="t" style="left:39.7px;top:37.8px;font-size:12.5px;color:#666;transform:scaleX(1.078);transform-origin:0 0">Surface</div>
  <div class="abs" style="left:2px;top:54px;width:186px;height:1px;background:#eee"></div>
  <div class="t" style="left:3.6px;top:61.8px;font-size:12.5px;font-weight:bold;color:#1b5faa;transform:scaleX(1.099);transform-origin:0 0">New</div>
  <div class="abs" style="left:4px;top:73.5px;width:30px;height:2px;background:#1b5faa"></div>
  <div class="t" style="left:36.1px;top:61.8px;font-size:12.5px;color:#666;transform:scaleX(1.067);transform-origin:0 0">Add</div>
  <div class="t" style="left:64.6px;top:61.8px;font-size:12.5px;color:#666;transform:scaleX(1.015);transform-origin:0 0">Remove</div>
  <div class="t" style="left:116.5px;top:61.8px;font-size:12.5px;color:#666;transform:scaleX(1.105);transform-origin:0 0">Intersect</div>
  <div class="abs" style="left:1px;top:80px;width:188px;height:28px;background:#d9edfa;border:2px solid #93c9ee"></div>
  <div class="t" style="left:8.1px;top:86.7px;font-size:12.5px;color:#333;transform:scaleX(1.056);transform-origin:0 0">Sketch 1</div>
  <div class="abs" style="left:1px;top:110px;width:188px;height:28px;background:#fff;border:1px solid #ccc"></div>
  <div class="t" style="left:8.1px;top:116.8px;font-size:12.5px;color:#333;transform:scaleX(1.037);transform-origin:0 0">Edge of Sketch 1</div>
  <div class="abs" style="left:1px;top:140px;width:160px;height:24px;background:#fff;border:1px solid #ccc"></div>
  <div class="t" style="left:7.5px;top:146.9px;font-size:12.5px;color:#333;transform:scaleX(1.173);transform-origin:0 0">Full</div>
  <svg style="left:148px;top:149px" width="7.6" height="6.2" viewBox="0 0 7.6 6.2"><path d="M0 0H7.6L3.8 6.2Z" fill="#777"/></svg>
  <div class="abs" style="left:7px;top:183px;width:92px;height:2px;background:#555"></div>
  <div class="abs" style="left:64.5px;top:178.5px;width:11.5px;height:11.5px;border-radius:50%;background:#fff;border:1.3px solid #888"></div>
  <div class="abs" style="left:112px;top:168px;width:49px;height:30px;background:#fff;border:1px solid #ccc;border-radius:3px"></div>
  <div class="t" style="left:122.7px;top:177.0px;font-size:12.5px;color:#333;transform:scaleX(0.998);transform-origin:0 0">Final</div>
  <svg style="left:175px;top:186px" width="12" height="12" viewBox="0 0 12 12"><circle cx="6" cy="6" r="6" fill="#777"/><text x="6" y="9.6" font-family="Liberation Sans" font-weight="bold" font-size="10" fill="#fff" text-anchor="middle">?</text></svg>
</div>
<!-- TABS -->
<div id="tabs">
  <div class="abs" style="left:0;top:-2px;width:217px;height:2px;background:linear-gradient(#a8a8a8,#c4c4c4)"></div>
  <div class="abs" style="left:217px;top:-1px;width:1063px;height:1px;background:#cfcfcf"></div>
  <div class="abs" style="left:16.2px;top:13.3px;width:13.8px;height:3px;background:#555"></div>
  <div class="abs" style="left:21.6px;top:8px;width:3px;height:13.6px;background:#555"></div>
  <svg style="left:62px;top:7.8px" width="14" height="14" viewBox="0 0 14 14"><g fill="#555"><rect x="0" y="0.3" width="2.2" height="2.4"/><rect x="3.5" y="0.3" width="10.5" height="2.4"/><rect x="0" y="3.9" width="2.2" height="2.4"/><rect x="3.5" y="3.9" width="10.5" height="2.4"/><rect x="0" y="7.5" width="2.2" height="2.4"/><rect x="3.5" y="7.5" width="10.5" height="2.4"/><rect x="0" y="11.1" width="2.2" height="2.4"/><rect x="3.5" y="11.1" width="10.5" height="2.4"/></g></svg>
  <div class="abs" style="left:94px;top:-1px;width:199.7px;height:27px;background:#fff;border-radius:0 0 5px 5px"></div>
  <svg style="left:104px;top:5px" width="16" height="15" viewBox="0 0 16 15"><path d="M7.5 0.7H12.4L14.8 3.3V14.4H4.1L1.1 11.7V7.3H7.5Z" fill="#fff" stroke="#333" stroke-width="1.3" stroke-linejoin="round"/><path d="M3.3 9.7H10.6V2.8M1.6 8L3.3 9.7M10.6 9.7L14.4 13.8" fill="none" stroke="#b5b5b5" stroke-width="0.8"/></svg>
  <div class="t" style="left:122.5px;top:7.0px;font-size:14px;color:#333;transform:scaleX(0.988);transform-origin:0 0">Part Studio 1</div>
  <div class="abs" style="left:295px;top:0;width:201.2px;height:25.8px;background:#e9e9e9;border-top:1px solid #cdcdcd;border-radius:0 0 5px 5px"></div>
  <svg style="left:306.5px;top:5.2px" width="16" height="15" viewBox="0 0 16 15"><path d="M0.6 0.5H11.5L14.3 3.3V14.2H3.9L0.6 11.1Z" fill="#fff" stroke="#333" stroke-width="1.3" stroke-linejoin="round"/><path d="M1.3 1.2H8.6L10.2 2.8V10.1H3.4L1.3 10.6Z" fill="#8c8c8c"/></svg>
  <div class="t" style="left:324.4px;top:7.0px;font-size:14px;color:#666;transform:scaleX(0.999);transform-origin:0 0">Assembly 1</div>
</div>
<div class="t" style="left:1165.9px;top:669.9px;font-size:12.5px;color:#666;transform:scaleX(1.073);transform-origin:0 0">Area: <b>0.4905</b> sq in</div>
</body>
</html>
